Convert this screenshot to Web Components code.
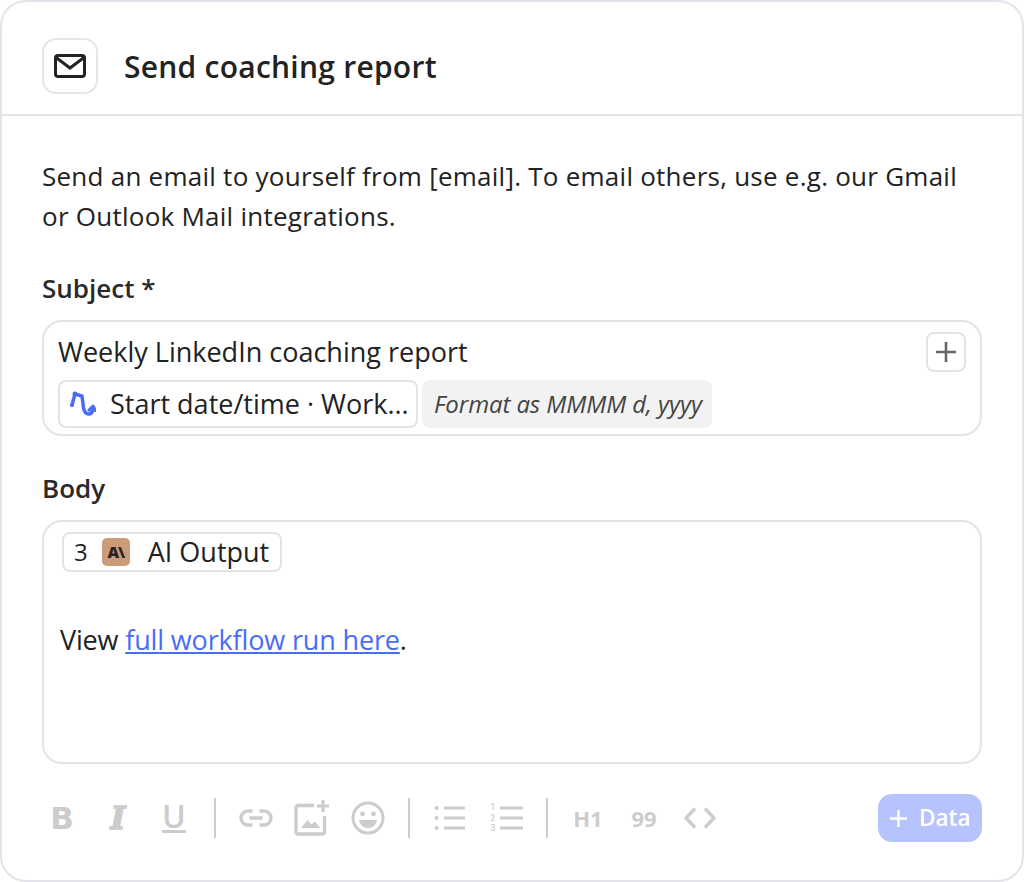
<!DOCTYPE html>
<html><head><meta charset="utf-8">
<style>
html,body{margin:0;padding:0;background:#fff}
body{font-family:"Open Sans","Liberation Sans",sans-serif;color:#222}
</style></head><body>
<template id="t-card"><style>
:host{display:flex;flex-direction:column;box-sizing:border-box;width:1024px;height:882px;border:2px solid #e3e3ec;border-radius:26px;background:#fff;overflow:hidden}
.main{display:flex;flex-direction:column;padding:40px 40px 0}
</style><slot name="header"></slot><div class="main"><slot></slot></div></template>

<template id="t-header"><style>
:host{display:flex;align-items:center;gap:26px;box-sizing:border-box;height:114px;padding:36px 40px 20px;border-bottom:2px solid #e3e3e8}
.ic{display:flex;align-items:center;justify-content:center;box-sizing:border-box;width:56px;height:56px;border:2px solid #e6e6e6;border-radius:14px}
h1{margin:2px 0 0;font:600 30px/40px "Open Sans",sans-serif;color:#222;letter-spacing:.25px}
</style><div class="ic"><svg width="32" height="24" viewBox="0 0 32 24" fill="none" stroke="#222" stroke-width="3"><rect x="1.500" y="1.500" width="29" height="21" rx="2.500"/><path d="M2 3.500l14 10.500L30 3.500"/></svg></div><h1><slot></slot></h1></template>

<template id="t-label"><style>
:host{display:block;font:600 26px/36px "Open Sans",sans-serif;color:#2a2a2a;margin:34px 0 14px}
</style><slot></slot></template>

<template id="t-box"><style>
:host{display:block;position:relative;box-sizing:border-box;border:2px solid #e4e4e4;border-radius:20px;background:#fff;font:400 27px/40px "Open Sans",sans-serif;color:#222}
</style><slot></slot></template>

<template id="t-chip"><style>
:host{display:flex;align-items:center;box-sizing:border-box;height:48px;border:2px solid #e4e4e4;border-radius:8px;background:#fff;font:400 27px/40px "Open Sans",sans-serif;color:#222;white-space:nowrap}
</style><slot></slot></template>

<template id="t-tb"><style>
:host{display:flex;align-items:center;justify-content:center;width:56px;height:40px;color:#ccc}
</style><slot></slot></template>

<template id="t-toolbar"><style>
:host{display:flex;align-items:center;height:48px;margin:30px 0 0 -8px}
</style><slot></slot></template>

<template id="t-sep"><style>:host{display:block;width:2px;height:40px;background:#ccc;margin:0 12px}</style></template>

<template id="t-data"><style>
:host{display:flex;align-items:center;gap:12px;box-sizing:border-box;width:104px;height:48px;margin-left:auto;padding-left:12px;border-radius:14px;background:#b7c3fd;color:#fff;font:600 22.500px/32px "Open Sans",sans-serif}
</style><svg width="17" height="17" viewBox="0 0 17 17" fill="none" stroke="#fff" stroke-width="2.400"><path d="M8.500 0v17M0 8.500h17"/></svg><slot></slot></template>

<coach-card>
  <coach-header slot="header">Send coaching report</coach-header>
  <coach-intro>Send an email to yourself from [email]. To email others, use e.g. our Gmail or Outlook Mail integrations.</coach-intro>
  <coach-label>Subject *</coach-label>
  <coach-subject></coach-subject>
  <coach-label>Body</coach-label>
  <coach-body></coach-body>
  <coach-toolbar>
    <tb-btn><span style="font:700 31px/1 'DejaVu Sans',sans-serif">B</span></tb-btn>
    <tb-btn><span style="font:italic 700 32px/1 'DejaVu Serif',serif;-webkit-text-stroke:1.500px #ccc">I</span></tb-btn>
    <tb-btn><span style="display:inline-block;height:27px;border-bottom:3px solid #ccc;font:600 32px/25px 'Open Sans',sans-serif">U</span></tb-btn>
    <tb-sep></tb-sep>
    <tb-btn><svg width="34" height="18" viewBox="0 0 34 18" fill="none" stroke="#ccc" stroke-width="3.400"><path d="M13.500 2H9a7 7 0 0 0 0 14h4.500M20.500 2H25a7 7 0 0 1 0 14h-4.500M10.500 9h13"/></svg></tb-btn>
    <tb-btn><svg width="36" height="36" viewBox="0 0 36 36" fill="none"><path d="M20 5.500H4a2 2 0 0 0-2 2V32a2 2 0 0 0 2 2h24.500a2 2 0 0 0 2-2V16" stroke="#ccc" stroke-width="3.400"/><path d="M7 28l6.500-8 4 4.500 3.500-3 5 6.500z" fill="#ccc"/><path d="M29 0v12M23 6h12" stroke="#ccc" stroke-width="3.200"/></svg></tb-btn>
    <tb-btn><svg width="34" height="34" viewBox="0 0 34 34" fill="none"><circle cx="17" cy="17" r="15" stroke="#ccc" stroke-width="3"/><circle cx="11.500" cy="13" r="2.400" fill="#ccc"/><circle cx="22.500" cy="13" r="2.400" fill="#ccc"/><path d="M8 19h18c-.8 5-4.500 8-9 8s-8.200-3-9-8z" fill="#ccc"/></svg></tb-btn>
    <tb-sep></tb-sep>
    <tb-btn><svg width="32" height="26" viewBox="0 0 32 26" fill="none"><circle cx="2.500" cy="3" r="2" fill="#ccc"/><circle cx="2.500" cy="13" r="2" fill="#ccc"/><circle cx="2.500" cy="23" r="2" fill="#ccc"/><path d="M10 3h21M10 13h21M10 23h21" stroke="#ccc" stroke-width="3.200"/></svg></tb-btn>
    <tb-btn><span style="display:inline-flex;gap:2px;align-items:center"><span style="display:flex;flex-direction:column;font:500 8.500px/10.500px Roboto,sans-serif;text-align:center;width:8px"><span>1</span><span>2</span><span>3</span></span><svg width="24" height="26" viewBox="0 0 24 26" stroke="#ccc" stroke-width="3.200"><path d="M1 3h23M1 13h23M1 23h23"/></svg></span></tb-btn>
    <tb-sep></tb-sep>
    <tb-btn><span style="font:700 22px/1 'Open Sans',sans-serif">H1</span></tb-btn>
    <tb-btn><span style="font:700 22px/1 'Open Sans',sans-serif">99</span></tb-btn>
    <tb-btn><svg width="32" height="22" viewBox="0 0 32 22" fill="none" stroke="#ccc" stroke-width="3.400"><path d="M11 1.500L2 11l9 9.500M21 1.500L30 11l-9 9.500"/></svg></tb-btn>
    <coach-data>Data</coach-data>
  </coach-toolbar>
</coach-card>

<script>
function tpl(name,id){customElements.define(name,class extends HTMLElement{constructor(){super();this.attachShadow({mode:'open'}).appendChild(document.getElementById(id).content.cloneNode(true));}});}
tpl('coach-card','t-card');tpl('coach-header','t-header');tpl('coach-label','t-label');tpl('coach-box','t-box');tpl('coach-chip','t-chip');tpl('tb-btn','t-tb');tpl('coach-toolbar','t-toolbar');tpl('tb-sep','t-sep');tpl('coach-data','t-data');
customElements.define('coach-intro',class extends HTMLElement{constructor(){super();this.attachShadow({mode:'open'}).innerHTML=`<style>:host{display:block;max-width:925px;font:400 26px/40px "Open Sans",sans-serif;color:#222;letter-spacing:.25px}</style><slot></slot>`}});
customElements.define('coach-subject',class extends HTMLElement{constructor(){super();this.attachShadow({mode:'open'}).innerHTML=`<style>
:host{display:block}
coach-box{height:116px;padding:10px 14px 0}
.line{height:40px}
.row{display:flex;gap:4px;margin-top:8px}
coach-chip{width:360px;padding-left:10px;gap:14px}
.fmt{display:flex;align-items:center;box-sizing:border-box;width:290px;height:48px;padding:0 0 0 12px;border-radius:8px;background:#f2f2f2;color:#444;font:italic 400 24px/40px "Open Sans",sans-serif;letter-spacing:-.1px}
.plus{position:absolute;top:10px;right:14px;display:flex;align-items:center;justify-content:center;box-sizing:border-box;width:40px;height:40px;border:2px solid #e4e4e4;border-radius:8px;background:#fff}
</style><coach-box><div class="line">Weekly LinkedIn coaching report</div><div class="row"><coach-chip><svg width="26" height="26" viewBox="0 0 26 26" fill="none" stroke="#4a6cf7" stroke-width="3.500" stroke-linecap="round" stroke-linejoin="round"><path d="M2 14L5 3 12 5 13.500 17Q15 23 18.500 23 22.500 23 23 17"/><path d="M19 19L23 15 25.500 19.500" stroke-width="3"/><circle cx="2" cy="14" r="2" fill="#4a6cf7" stroke="none"/><circle cx="5" cy="3" r="2.500" fill="#4a6cf7" stroke="none"/></svg><span>Start date/time · Work...</span></coach-chip><div class="fmt">Format as MMMM d, yyyy</div></div><div class="plus"><svg width="24" height="24" viewBox="0 0 24 24" stroke="#666" stroke-width="2.600"><path d="M12 2v20M2 12h20"/></svg></div></coach-box>`}});
customElements.define('coach-body',class extends HTMLElement{constructor(){super();this.attachShadow({mode:'open'}).innerHTML=`<style>
:host{display:block}
coach-box{height:244px;padding:10px 16px 0}
coach-chip{height:40px;width:220px;padding-left:10px;margin-left:2px}
.n{font-size:24px}
.badge{display:flex;align-items:center;justify-content:center;width:28px;height:28px;margin:0 18px 0 14px;border-radius:5px;background:#cb9b7a}
.badge span{font:800 16px/1 "Open Sans",sans-serif;color:#2a2320;letter-spacing:-1px}
.v{margin-top:48px;display:block;letter-spacing:-.15px}
a{color:#4a6cf7;text-decoration:underline}
</style><coach-box><coach-chip><span class="n">3</span><span class="badge"><span>A\\</span></span><span>AI Output</span></coach-chip><div class="v">View <a href="#">full workflow run here</a>.</div></coach-box>`}});
</script>
</body></html>
